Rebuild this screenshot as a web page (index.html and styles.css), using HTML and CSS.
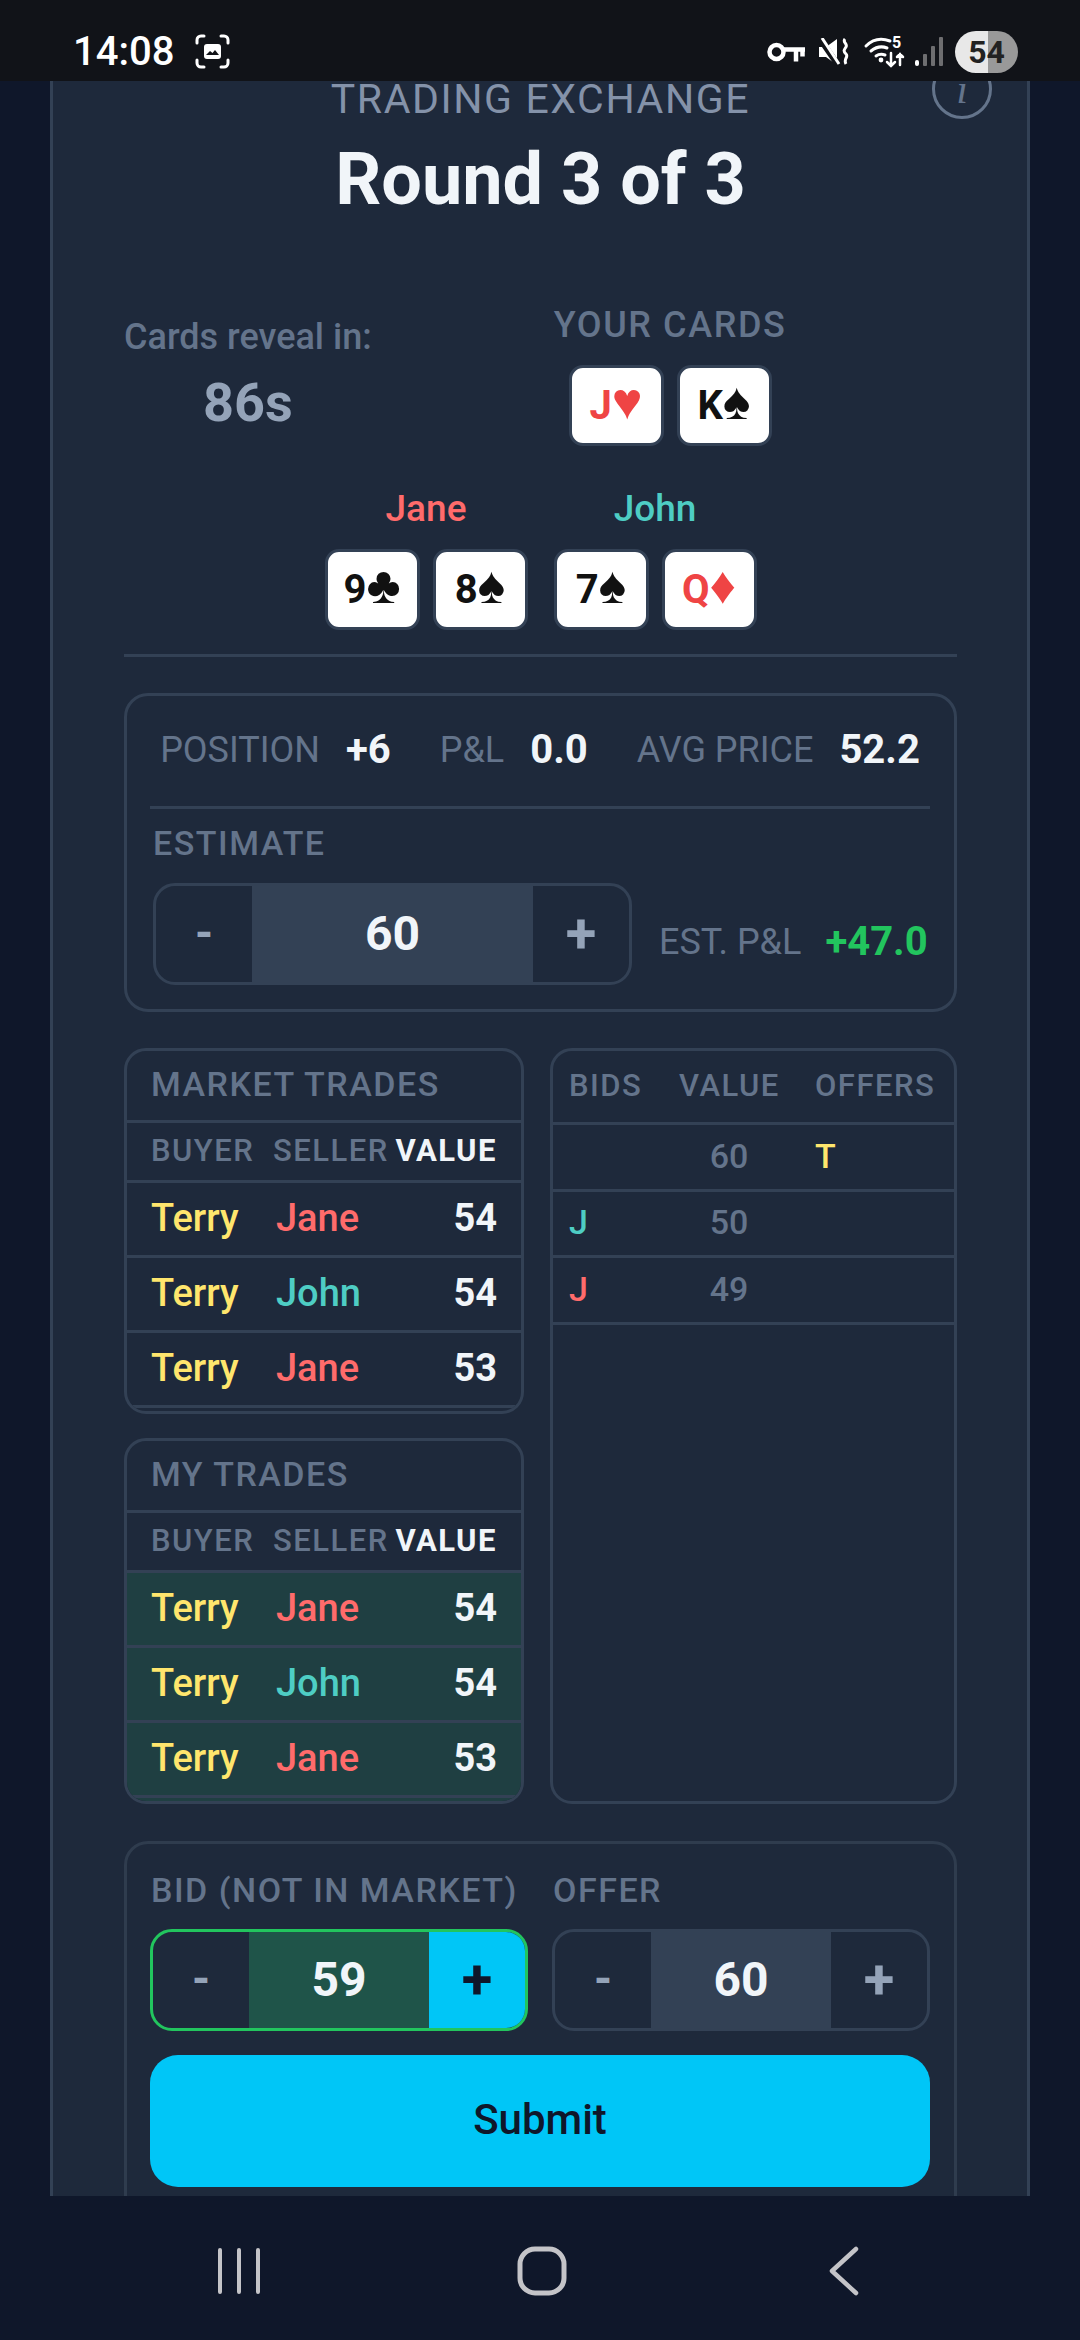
FILE: index.html
```html
<!DOCTYPE html>
<html>
<head>
    <title>Trading Exchange</title>
    <link rel="stylesheet" href="styles.css">
</head>
<body>
    <div class="statusbar">
        <div class="status-left">
            <span class="clock">14:08</span>
            <svg class="shot-icon" width="35" height="35" viewBox="0 0 35 35" fill="none" stroke="#fff" stroke-width="3" stroke-linecap="round">
                <path d="M2 9V6a4 4 0 0 1 4-4h3M26 2h3a4 4 0 0 1 4 4v3M33 26v3a4 4 0 0 1-4 4h-3M9 33H6a4 4 0 0 1-4-4v-3"/>
                <rect x="9" y="10" width="17" height="15" rx="3" fill="#fff" stroke="none"/>
                <path d="M11 21l4-4 2.500 2 2.500-3 4 5z" fill="#111318" stroke="none"/>
            </svg>
        </div>
        <div class="status-right">
            <svg class="ic-key" width="38" height="20" viewBox="0 0 38 20" fill="none" stroke="#fff" stroke-width="4.500">
                <circle cx="9.500" cy="10" r="7"/>
                <path d="M16 7.500h22M29 7.500v12M35.500 7.500v7"/>
            </svg>
            <svg class="ic-mute" width="30" height="28" viewBox="0 0 30 28" fill="none">
                <path d="M0 9h7l11-8v26l-11-8H0z" fill="#fff"/>
                <path d="M1 1l18 26" stroke="#111318" stroke-width="6"/>
                <path d="M3 0l17 26" stroke="#fff" stroke-width="3"/>
                <path d="M26 1c-3 3 3 5 1 8s-3 4 0 7-3 5 0 10" stroke="#fff" stroke-width="3"/>
            </svg>
            <svg class="ic-wifi" width="40" height="32" viewBox="0 0 40 32" fill="none" stroke="#fff" stroke-width="3" stroke-linecap="round">
                <path d="M1 10c7-7 16-8 24-5M6 15c5-4 11-5 16-3M11 20c3-2 6-2 9-1"/>
                <circle cx="16" cy="24" r="2.400" fill="#fff" stroke="none"/>
                <path d="M26 17v13M22 26l4 4 4-4M35 29V18M32 21l3-3 3 3" stroke-width="2.500"/>
                <text x="27" y="12" class="wifi-num">5</text>
            </svg>
            <svg class="ic-signal" width="28" height="30" viewBox="0 0 28 30">
                <rect x="0" y="23" width="4" height="6" rx="2" fill="#fff"/>
                <rect x="8" y="17" width="4" height="12" rx="1" fill="#6e6e70"/>
                <rect x="16" y="9" width="4" height="20" rx="1" fill="#6e6e70"/>
                <rect x="24" y="0" width="4" height="29" rx="1" fill="#6e6e70"/>
            </svg>
            <span class="battery">54</span>
        </div>
    </div>

    <div class="screen">
        <div class="card">
            <div class="info-btn">i</div>
            <div class="subtitle">TRADING EXCHANGE</div>
            <h1>Round 3 of 3</h1>

            <div class="top-row">
                <div class="timer">
                    <div class="timer-label">Cards reveal in:</div>
                    <div class="timer-value">86s</div>
                </div>
                <div class="hand">
                    <div class="label">YOUR CARDS</div>
                    <div class="cards">
                        <div class="playing-card red">J<span class="suit">♥</span></div>
                        <div class="playing-card">K<span class="suit">♠</span></div>
                    </div>
                </div>
            </div>

            <div class="players">
                <div class="hand">
                    <div class="player-name jane">Jane</div>
                    <div class="cards">
                        <div class="playing-card">9<span class="suit">♣</span></div>
                        <div class="playing-card">8<span class="suit">♠</span></div>
                    </div>
                </div>
                <div class="hand">
                    <div class="player-name john">John</div>
                    <div class="cards">
                        <div class="playing-card">7<span class="suit">♠</span></div>
                        <div class="playing-card red">Q<span class="suit">♦</span></div>
                    </div>
                </div>
            </div>

            <div class="divider"></div>

            <div class="panel position-panel">
                <div class="stats">
                    <div class="stat"><span class="stat-label">POSITION</span><span class="stat-value">+6</span></div>
                    <div class="stat"><span class="stat-label">P&amp;L</span><span class="stat-value">0.0</span></div>
                    <div class="stat"><span class="stat-label">AVG PRICE</span><span class="stat-value">52.2</span></div>
                </div>
                <div class="label estimate-label">ESTIMATE</div>
                <div class="estimate-row">
                    <div class="stepper estimate-stepper">
                        <div class="step-btn">-</div>
                        <div class="step-value">60</div>
                        <div class="step-btn">+</div>
                    </div>
                    <div class="stat est-pl"><span class="stat-label">EST. P&amp;L</span><span class="stat-value green">+47.0</span></div>
                </div>
            </div>

            <div class="market">
                <div class="market-left">
                    <div class="trades">
                        <div class="trades-title">MARKET TRADES</div>
                        <div class="trade-row trade-head"><span>BUYER</span><span>SELLER</span><span class="value">VALUE</span></div>
                        <div class="trade-row"><span class="terry">Terry</span><span class="jane seller">Jane</span><span class="value">54</span></div>
                        <div class="trade-row"><span class="terry">Terry</span><span class="john seller">John</span><span class="value">54</span></div>
                        <div class="trade-row"><span class="terry">Terry</span><span class="jane seller">Jane</span><span class="value">53</span></div>
                        <div class="trades-end"></div>
                    </div>
                    <div class="trades mine">
                        <div class="trades-title">MY TRADES</div>
                        <div class="trade-row trade-head"><span>BUYER</span><span>SELLER</span><span class="value">VALUE</span></div>
                        <div class="trade-row"><span class="terry">Terry</span><span class="jane seller">Jane</span><span class="value">54</span></div>
                        <div class="trade-row"><span class="terry">Terry</span><span class="john seller">John</span><span class="value">54</span></div>
                        <div class="trade-row"><span class="terry">Terry</span><span class="jane seller">Jane</span><span class="value">53</span></div>
                        <div class="trades-end"></div>
                    </div>
                </div>
                <div class="book">
                    <div class="book-row book-head"><span>BIDS</span><span>VALUE</span><span>OFFERS</span></div>
                    <div class="book-row"><span></span><span class="price">60</span><span class="terry">T</span></div>
                    <div class="book-row"><span class="john">J</span><span class="price">50</span><span></span></div>
                    <div class="book-row"><span class="jane">J</span><span class="price">49</span><span></span></div>
                </div>
            </div>

            <div class="panel order-panel">
                <div class="order-grid">
                    <div class="label">BID (NOT IN MARKET)</div>
                    <div class="label">OFFER</div>
                    <div class="stepper active">
                        <div class="step-btn">-</div>
                        <div class="step-value">59</div>
                        <div class="step-btn">+</div>
                    </div>
                    <div class="stepper">
                        <div class="step-btn">-</div>
                        <div class="step-value">60</div>
                        <div class="step-btn">+</div>
                    </div>
                </div>
                <button class="submit">Submit</button>
            </div>
        </div>
    </div>

    <div class="navbar">
        <svg width="44" height="48" viewBox="0 0 44 48" stroke="#c4c4c8" stroke-width="4" stroke-linecap="round">
            <path d="M3 3v42M22 3v42M41 3v42"/>
        </svg>
        <svg width="50" height="50" viewBox="0 0 50 50" fill="none" stroke="#c4c4c8" stroke-width="5">
            <rect x="3" y="3" width="44" height="44" rx="15"/>
        </svg>
        <svg width="32" height="50" viewBox="0 0 32 50" fill="none" stroke="#c4c4c8" stroke-width="4.500" stroke-linecap="round" stroke-linejoin="round">
            <path d="M28 3L4 25l24 22"/>
        </svg>
    </div>
</body>
</html>
```

FILE: styles.css
```css
* {
    box-sizing: border-box;
}

body {
    font-family: Roboto, "Liberation Sans", sans-serif;
    background-color: #0f172a;
    margin: 0;
    height: 2340px;
    overflow: hidden;
    display: flex;
    flex-direction: column;
}

/* phone status bar */
.statusbar {
    height: 81px;
    flex: none;
    background-color: #111318;
    display: flex;
    justify-content: space-between;
    align-items: center;
    padding: 22px 62px 0 73px;
    position: relative;
    z-index: 2;
}

.status-left {
    display: flex;
    align-items: center;
    gap: 21px;
}

.clock {
    color: #fff;
    font-size: 40px;
    font-weight: 500;
}

.status-right {
    display: flex;
    align-items: center;
}

.ic-mute {
    margin-left: 14px;
}

.ic-wifi {
    margin-left: 16px;
    overflow: visible;
}

.ic-signal {
    margin-left: 10px;
}

.wifi-num {
    fill: #fff;
    stroke: none;
    font-size: 16px;
    font-weight: 700;
}

.battery {
    width: 63px;
    height: 42px;
    margin-left: 12px;
    border-radius: 21px;
    background: linear-gradient(90deg, #e8e8e8 52%, #999 52%);
    color: #222;
    font-size: 32px;
    font-weight: 700;
    display: flex;
    align-items: center;
    justify-content: center;
}

/* page */
.screen {
    flex: 1;
    min-height: 0;
    overflow: hidden;
    padding: 0 50px;
}

.card {
    position: relative;
    margin-top: -40px;
    background-color: #1e293b;
    border-left: 3px solid #334155;
    border-right: 3px solid #334155;
    padding: 36px 70px 0 71px;
}

.info-btn {
    position: absolute;
    top: 18px;
    right: 35px;
    width: 60px;
    height: 60px;
    border: 3px solid #64748b;
    border-radius: 50%;
    color: #64748b;
    font-family: "Liberation Serif", serif;
    font-style: italic;
    font-size: 42px;
    display: flex;
    align-items: center;
    justify-content: center;
}

.subtitle {
    color: #8492a9;
    font-size: 41px;
    line-height: 44px;
    letter-spacing: 1.600px;
    text-align: center;
}

h1 {
    color: #f1f5f9;
    font-size: 72px;
    line-height: 80px;
    font-weight: 700;
    text-align: center;
    margin: 19px 0 0;
}

.label {
    color: #64748b;
    font-size: 34px;
    line-height: 40px;
    font-weight: 500;
    letter-spacing: 1.500px;
}

.top-row {
    display: flex;
    gap: 182px;
    margin-top: 85px;
}

.top-row .label {
    font-size: 36px;
    letter-spacing: 1.600px;
}

.timer {
    text-align: center;
    padding-top: 12px;
}

.timer-label {
    color: #64748b;
    font-size: 36px;
    line-height: 40px;
    font-weight: 500;
}

.timer-value {
    color: #94a3b8;
    font-size: 54px;
    line-height: 60px;
    font-weight: 700;
    margin-top: 16px;
}

.hand {
    display: flex;
    flex-direction: column;
    align-items: center;
}

.cards {
    display: flex;
    gap: 13px;
    margin-top: 20px;
}

.playing-card {
    width: 95px;
    height: 81px;
    background-color: #fff;
    border: 3px solid #334155;
    border-radius: 14px;
    color: #111;
    font-size: 40px;
    line-height: 75px;
    font-weight: 700;
    text-align: center;
}

.playing-card.red {
    color: #ef4444;
}

.suit {
    font-family: "Liberation Sans", sans-serif;
    font-size: 52px;
    line-height: 0;
    font-weight: 400;
}

.players {
    display: flex;
    justify-content: center;
    gap: 26px;
    margin-top: 43px;
}

.player-name {
    font-size: 37px;
    line-height: 40px;
    font-weight: 500;
}

.jane {
    color: #ff6b6b;
}

.john {
    color: #4ecdc4;
}

.terry {
    color: #ffe66d;
}

.divider {
    border-top: 3px solid #334155;
    margin-top: 24px;
}

.panel {
    border: 3px solid #334155;
    border-radius: 24px;
}

/* position and estimate */
.position-panel {
    margin-top: 36px;
    padding: 32px 24px 24px 23px;
}

.stats {
    display: flex;
    justify-content: center;
    gap: 49px;
    padding-bottom: 34px;
    border-bottom: 3px solid #334155;
}

.stat {
    display: flex;
    gap: 26px;
    line-height: 44px;
}

.stat-label {
    color: #64748b;
    font-size: 36px;
}

.stat-value {
    color: #f1f5f9;
    font-size: 40px;
    font-weight: 700;
}

.stat-value.green {
    color: #22c55e;
}

.estimate-label {
    margin: 14px 0 0 3px;
}

.estimate-row {
    display: flex;
    align-items: center;
    gap: 27px;
    margin: 20px 0 0 3px;
}

.est-pl {
    margin-top: 16px;
    gap: 24px;
}

/* stepper */
.stepper {
    display: flex;
    height: 102px;
    border: 3px solid #334155;
    border-radius: 22px;
    overflow: hidden;
}

.estimate-stepper {
    width: 479px;
}

.step-btn {
    width: 96px;
    flex: none;
    color: #94a3b8;
    font-size: 46px;
    font-weight: 700;
    padding-bottom: 2px;
    display: flex;
    align-items: center;
    justify-content: center;
}

.step-btn:last-child {
    font-size: 56px;
}

.step-value {
    flex: 1;
    background-color: #334155;
    color: #f1f5f9;
    font-size: 48px;
    font-weight: 700;
    padding-bottom: 2px;
    display: flex;
    align-items: center;
    justify-content: center;
}

.stepper.active {
    border-color: #22c55e;
}

.stepper.active .step-value {
    background-color: #1f5449;
}

.stepper.active .step-btn:last-child {
    background-color: #00c6f7;
    color: #0f172a;
}

/* trades and order book */
.market {
    display: grid;
    grid-template-columns: 400px 1fr;
    gap: 26px;
    margin-top: 36px;
}

.market-left {
    display: flex;
    flex-direction: column;
    gap: 24px;
}

.trades,
.book {
    border: 3px solid #334155;
    border-radius: 22px;
    overflow: hidden;
}

.trades {
    height: 366px;
}

.trades-title {
    height: 72px;
    border-bottom: 3px solid #334155;
    color: #64748b;
    font-size: 34px;
    line-height: 66px;
    font-weight: 500;
    letter-spacing: 1.500px;
    padding-left: 24px;
}

.trades-end {
    height: 3px;
}

.trade-row {
    display: grid;
    grid-template-columns: 122px 115px 1fr;
    align-items: center;
    height: 75px;
    padding: 0 24px 2px;
    border-bottom: 3px solid #334155;
    font-size: 38px;
    font-weight: 500;
}

.trade-row .seller {
    padding-left: 3px;
}

.trade-row .value {
    color: #f1f5f9;
    font-weight: 700;
    text-align: right;
}

.trade-head {
    height: 60px;
    color: #64748b;
    font-size: 31px;
    letter-spacing: 1.500px;
}

.trade-head .value {
    font-size: 31px;
}

.mine .trade-row:not(.trade-head),
.mine .trades-end {
    background-color: #1f3f42;
}

.book-row {
    display: grid;
    grid-template-columns: 74px 100px auto;
    gap: 36px;
    align-items: center;
    height: 66.500px;
    padding: 0 0 2px 16px;
    border-bottom: 3px solid #334155;
    font-size: 34px;
    font-weight: 500;
}

.book-head {
    height: 74px;
    color: #64748b;
    font-size: 31px;
    letter-spacing: 1.500px;
}

.book-row .price {
    color: #64748b;
    text-align: center;
}

/* bid and offer */
.order-panel {
    margin-top: 37px;
    height: 400px;
    padding: 26px 24px 0 23px;
    border-color: #2f3c4e;
}

.order-grid {
    display: grid;
    grid-template-columns: 378px 378px;
    gap: 19px 24px;
}

.order-grid .label {
    padding-left: 1px;
}

.submit {
    display: block;
    width: 100%;
    height: 132px;
    margin-top: 24px;
    padding-bottom: 4px;
    background-color: #00c6f7;
    color: #0f172a;
    border: none;
    border-radius: 28px;
    font-family: inherit;
    font-size: 42px;
    font-weight: 500;
    cursor: pointer;
}

/* android nav buttons */
.navbar {
    height: 144px;
    flex: none;
    background-color: #0f172a;
    display: grid;
    grid-template-columns: repeat(3, 302.500px);
    justify-items: center;
    align-items: center;
    padding: 6px 0 0 88px;
    position: relative;
    z-index: 2;
}
```
